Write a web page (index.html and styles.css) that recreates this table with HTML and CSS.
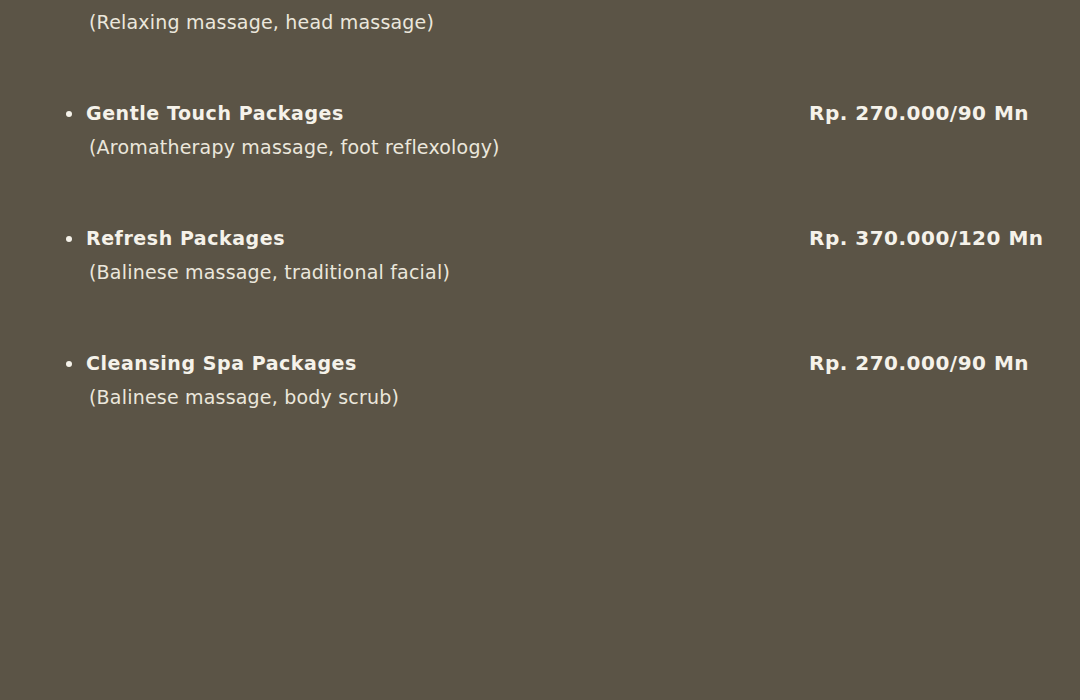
FILE: index.html
```html
<!DOCTYPE html>
<html lang="id">
<head>
    <meta charset="UTF-8">
    <meta name="viewport" content="width=device-width, initial-scale=1.0">
    <title>Spa Packages</title>
    <link rel="stylesheet" href="styles.css">
</head>
<body>
    <ul class="packages">
        <li class="package">
            <div class="info">
                <h3>Traditional Packages</h3>
                <p>(Relaxing massage, head massage)</p>
            </div>
            <span class="price">Rp. 170.000/60 Mn</span>
        </li>
        <li class="package">
            <div class="info">
                <h3>Gentle Touch Packages</h3>
                <p>(Aromatherapy massage, foot reflexology)</p>
            </div>
            <span class="price">Rp. 270.000/90 Mn</span>
        </li>
        <li class="package">
            <div class="info">
                <h3>Refresh Packages</h3>
                <p>(Balinese massage, traditional facial)</p>
            </div>
            <span class="price">Rp. 370.000/120 Mn</span>
        </li>
        <li class="package">
            <div class="info">
                <h3>Cleansing Spa Packages</h3>
                <p>(Balinese massage, body scrub)</p>
            </div>
            <span class="price">Rp. 270.000/90 Mn</span>
        </li>
    </ul>
</body>
</html>
```

FILE: styles.css
```css
html, body { height: 100%; }
body { margin: 0; background: #5b5446; color: #f5f2ea; font-family: "DejaVu Sans", Arial, sans-serif; overflow: hidden; }
.packages { list-style: none; margin: -26px 0 0; padding: 0 0 0 86px; display: flex; flex-direction: column; gap: 60px; }
.package { display: flex; align-items: flex-start; position: relative; height: 65px; }
.package::before { content: ""; position: absolute; left: -20px; top: 12px; width: 6px; height: 6px; border-radius: 50%; background: #f5f2ea; }
.info { width: 723px; }
.info h3 { margin: 0; font-size: 19px; font-weight: bold; line-height: 28px; letter-spacing: 0.55px; }
.info p { margin: 8px 0 0 3px; font-size: 19px; line-height: 24px; color: #ebe7dc; letter-spacing: 0.2px; }
.price { font-size: 20px; font-weight: bold; line-height: 28px; letter-spacing: 0.5px; white-space: nowrap; }
```
